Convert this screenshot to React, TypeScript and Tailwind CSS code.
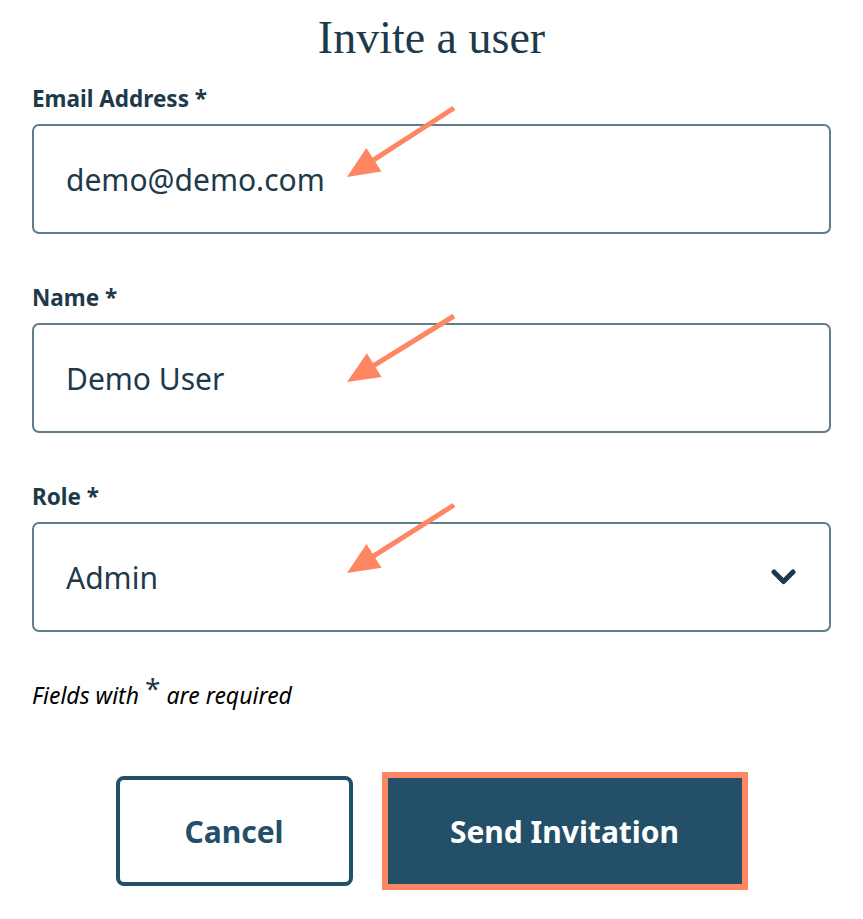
import { useState } from "react";

const sans = { fontFamily: '"Noto Sans", "Open Sans", sans-serif' };

function Arrow({ x1, y1, x2, y2 }: { x1: number; y1: number; x2: number; y2: number }) {
  // arrow from (x1,y1) pointing to tip (x2,y2)
  const dx = x2 - x1;
  const dy = y2 - y1;
  const len = Math.sqrt(dx * dx + dy * dy);
  const ux = dx / len;
  const uy = dy / len;
  const head = 32;
  const half = 14;
  const bx = x2 - ux * head;
  const by = y2 - uy * head;
  const p1 = `${bx - uy * half},${by + ux * half}`;
  const p2 = `${bx + uy * half},${by - ux * half}`;
  return (
    <g>
      <line
        x1={x1}
        y1={y1}
        x2={bx + ux * 4}
        y2={by + uy * 4}
        stroke="#ff8663"
        strokeWidth={5}
      />
      <polygon points={`${x2},${y2} ${p1} ${p2}`} fill="#ff8663" />
    </g>
  );
}

function Field({
  label,
  children,
}: {
  label: string;
  children: React.ReactNode;
}) {
  return (
    <div className="flex flex-col">
      <label className="text-[22.5px] leading-[24px] font-bold text-[#1d3a4a] mb-[13px] mt-[1px]">
        {label} *
      </label>
      {children}
    </div>
  );
}

export default function App() {
  const [email, setEmail] = useState("demo@demo.com");
  const [name, setName] = useState("Demo User");
  const [role, setRole] = useState("Admin");

  return (
    <div className="relative w-[863px] h-[919px] bg-white overflow-hidden" style={sans}>
      <div className="flex flex-col px-[32px] pt-[14px]">
        <h1
          className="text-center text-[46px] leading-[48px] text-[#1d3a4a] mb-[24px]"
          style={{ fontFamily: '"Liberation Serif", "DejaVu Serif", serif' }}
        >
          Invite a user
        </h1>

        <div className="flex flex-col gap-[51px] w-[799px]">
          <Field label="Email Address">
            <input
              value={email}
              onChange={(e) => setEmail(e.target.value)}
              className="h-[110px] w-full rounded-[7px] border-2 border-[#5e7d8d] px-[32px] text-[30px] text-[#1d3a4a] outline-none"
              style={sans}
            />
          </Field>
          <Field label="Name">
            <input
              value={name}
              onChange={(e) => setName(e.target.value)}
              className="h-[110px] w-full rounded-[7px] border-2 border-[#5e7d8d] px-[32px] text-[30px] text-[#1d3a4a] outline-none"
              style={sans}
            />
          </Field>
          <Field label="Role">
            <div className="relative">
              <select
                value={role}
                onChange={(e) => setRole(e.target.value)}
                className="appearance-none h-[110px] w-full rounded-[7px] border-2 border-[#5e7d8d] bg-white px-[32px] text-[30px] text-[#1d3a4a] outline-none"
                style={sans}
              >
                <option>Admin</option>
                <option>User</option>
              </select>
              <svg
                className="pointer-events-none absolute right-[35px] top-[47px]"
                width="25"
                height="17"
                viewBox="0 0 25 17"
              >
                <polyline
                  points="3,3 12.5,12.5 22,3"
                  fill="none"
                  stroke="#1d3a4a"
                  strokeWidth="5"
                  strokeLinecap="round"
                  strokeLinejoin="round"
                />
              </svg>
            </div>
          </Field>
        </div>

        <p className="mt-[48px] text-[23px] italic text-black leading-[30px]">
          Fields with{" "}
          <span className="relative top-[-5px] text-[#1d3a4a] not-italic text-[28px] leading-[0]">*</span> are required
        </p>

        <div className="flex justify-center items-center gap-[29px] mt-[62px] w-[799px]">
          <button
            className="h-[110px] w-[237px] rounded-[8px] border-4 border-[#234f68] bg-white text-[30px] font-bold text-[#234f68]"
            style={sans}
          >
            Cancel
          </button>
          <button
            className="h-[118px] w-[366px] border-[6px] border-[#ff8663] bg-[#234f68] text-[30px] font-bold text-white"
            style={sans}
          >
            Send Invitation
          </button>
        </div>
      </div>

      <svg className="pointer-events-none absolute inset-0" width="863" height="919">
        <Arrow x1={454} y1={108} x2={347} y2={177} />
        <Arrow x1={454} y1={316} x2={347} y2={382} />
        <Arrow x1={454} y1={505} x2={347} y2={573} />
      </svg>
    </div>
  );
}
